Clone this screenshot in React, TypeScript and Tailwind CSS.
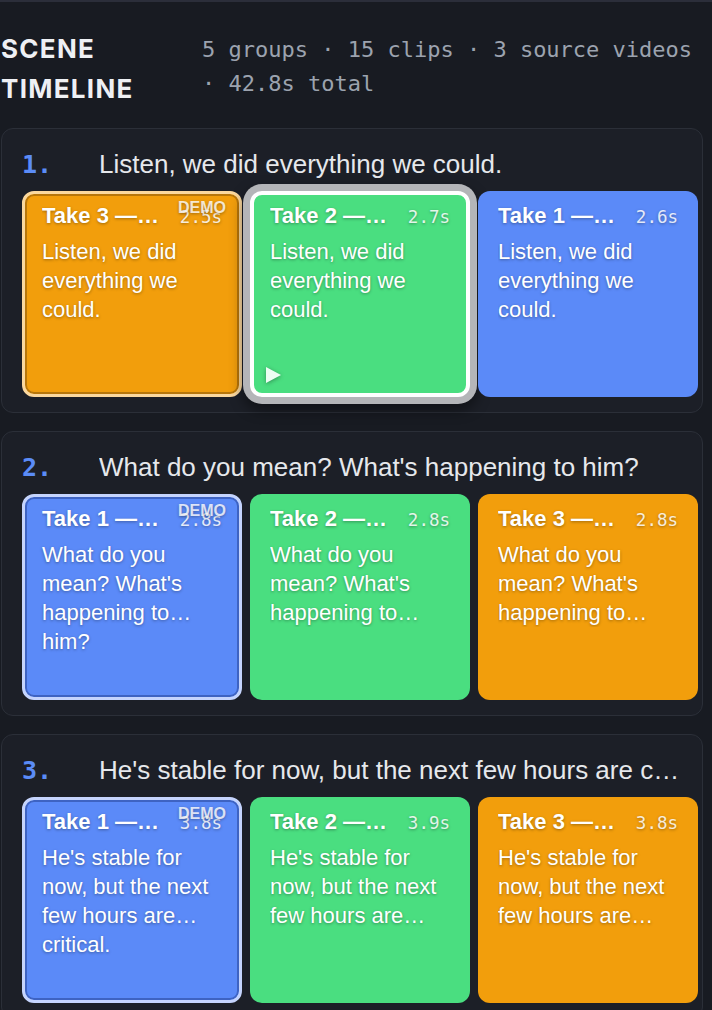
import React from 'react';

type Take = 1 | 2 | 3;

type Clip = {
  take: Take;
  source: string;
  duration: string;
  text: string;
  demo?: boolean;
  selected?: boolean;
};

type Group = {
  line: string;
  clips: Clip[];
};

const sans = "font-['Liberation_Sans',Arial,sans-serif]";
const mono = "font-['DejaVu_Sans_Mono',Menlo,monospace]";
const shadowText = '[text-shadow:0_1px_3px_rgba(0,0,0,0.35)]';

const takeColors: Record<Take, { bg: string; demo: string }> = {
  1: { bg: 'bg-[#5b8af8]', demo: 'border-[#c5d4fd] shadow-[inset_0_0_0_2px_#3e63c2]' },
  2: { bg: 'bg-[#4ade80]', demo: 'border-[#c8f5d8] shadow-[inset_0_0_0_2px_#279a50]' },
  3: { bg: 'bg-[#f29e0c]', demo: 'border-[#fbd89e] shadow-[inset_0_0_0_2px_#b7760b]' },
};

const groups: Group[] = [
  {
    line: 'Listen, we did everything we could.',
    clips: [
      { take: 3, source: 'camera_c.mov', duration: '2.5s', text: 'Listen, we did everything we could.', demo: true },
      { take: 2, source: 'camera_b.mov', duration: '2.7s', text: 'Listen, we did everything we could.', selected: true },
      { take: 1, source: 'camera_a.mov', duration: '2.6s', text: 'Listen, we did everything we could.' },
    ],
  },
  {
    line: "What do you mean? What's happening to him?",
    clips: [
      { take: 1, source: 'camera_a.mov', duration: '2.8s', text: "What do you mean? What's happening to… him?", demo: true },
      { take: 2, source: 'camera_b.mov', duration: '2.8s', text: "What do you mean? What's happening to him?" },
      { take: 3, source: 'camera_c.mov', duration: '2.8s', text: "What do you mean? What's happening to him?" },
    ],
  },
  {
    line: "He's stable for now, but the next few hours are critical.",
    clips: [
      { take: 1, source: 'camera_a.mov', duration: '3.8s', text: "He's stable for now, but the next few hours are… critical.", demo: true },
      { take: 2, source: 'camera_b.mov', duration: '3.9s', text: "He's stable for now, but the next few hours are critical." },
      { take: 3, source: 'camera_c.mov', duration: '3.8s', text: "He's stable for now, but the next few hours are critical." },
    ],
  },
];

const ClipCard: React.FC<{ clip: Clip }> = ({ clip }) => {
  const color = takeColors[clip.take];
  let frame = 'px-5 pt-[13px]';
  if (clip.demo) frame = `border-[3px] ${color.demo} px-[17px] pt-[10px]`;
  if (clip.selected) frame = 'border-4 border-white shadow-[0_0_0_7px_#b4b5b8,0_6px_14px_7px_rgba(0,0,0,0.45)] px-4 pt-[9px]';

  return (
    <div className={`relative w-[220px] h-[206px] shrink-0 rounded-xl ${color.bg} ${frame} text-white ${shadowText}`}>
      <div className="flex items-baseline gap-[19px]">
        <span className={`${sans} flex-1 min-w-0 truncate text-[22px] leading-6 font-bold`}>
          Take {clip.take} — {clip.source}
        </span>
        <span className={`${mono} shrink-0 text-[17.5px] leading-6 text-white/85`}>{clip.duration}</span>
      </div>
      <p className={`${sans} mt-[8px] text-[22px] leading-[29px] ${clip.demo ? '' : 'line-clamp-3'}`}>{clip.text}</p>
      {clip.demo && (
        <span className={`${sans} absolute top-[6px] right-[13px] text-[16px] leading-4 font-bold text-white/80`}>DEMO</span>
      )}
      {clip.selected && (
        <svg className="absolute left-[11px] bottom-[9px] drop-shadow-[0_1px_2px_rgba(0,0,0,0.35)]" width="17" height="18" viewBox="0 0 17 18">
          <path d="M1 1 L16 9 L1 17 Z" fill="#ecfdf3" />
        </svg>
      )}
    </div>
  );
};

export default function App() {
  return (
    <div className="min-h-screen bg-[#181b22] border-t-2 border-[#2b2e3a] px-[1px] pb-10">
      <header className="flex items-start pt-[27px]">
        <h1 className="w-[201px] shrink-0 font-['Inter',sans-serif] text-[26px] leading-10 font-bold tracking-[0.05em] text-[#eef0f4]">
          SCENE TIMELINE
        </h1>
        <p className={`${mono} pt-1 text-[22px] leading-[34px] text-[#9ca3af]`}>
          5 groups · 15 clips · 3 source videos · 42.8s total
        </p>
      </header>

      <div className="mt-[19px] flex flex-col gap-[18px] w-[702px]">
        {groups.map((g, i) => (
          <section key={i} className="rounded-xl border border-[#2b2f38] bg-[#1c1f27] px-5 pt-[19px] pb-[15px]">
            <div className="flex items-baseline">
              <span className={`${mono} w-[77px] shrink-0 text-[25px] leading-8 font-bold text-[#5b8cf7]`}>{i + 1}.</span>
              <span className={`${sans} min-w-0 truncate text-[26px] leading-8 text-[#e6e8ec]`}>{g.line}</span>
            </div>
            <div className="mt-[10px] flex gap-2">
              {g.clips.map((c, j) => (
                <ClipCard key={j} clip={c} />
              ))}
            </div>
          </section>
        ))}
      </div>
    </div>
  );
}
